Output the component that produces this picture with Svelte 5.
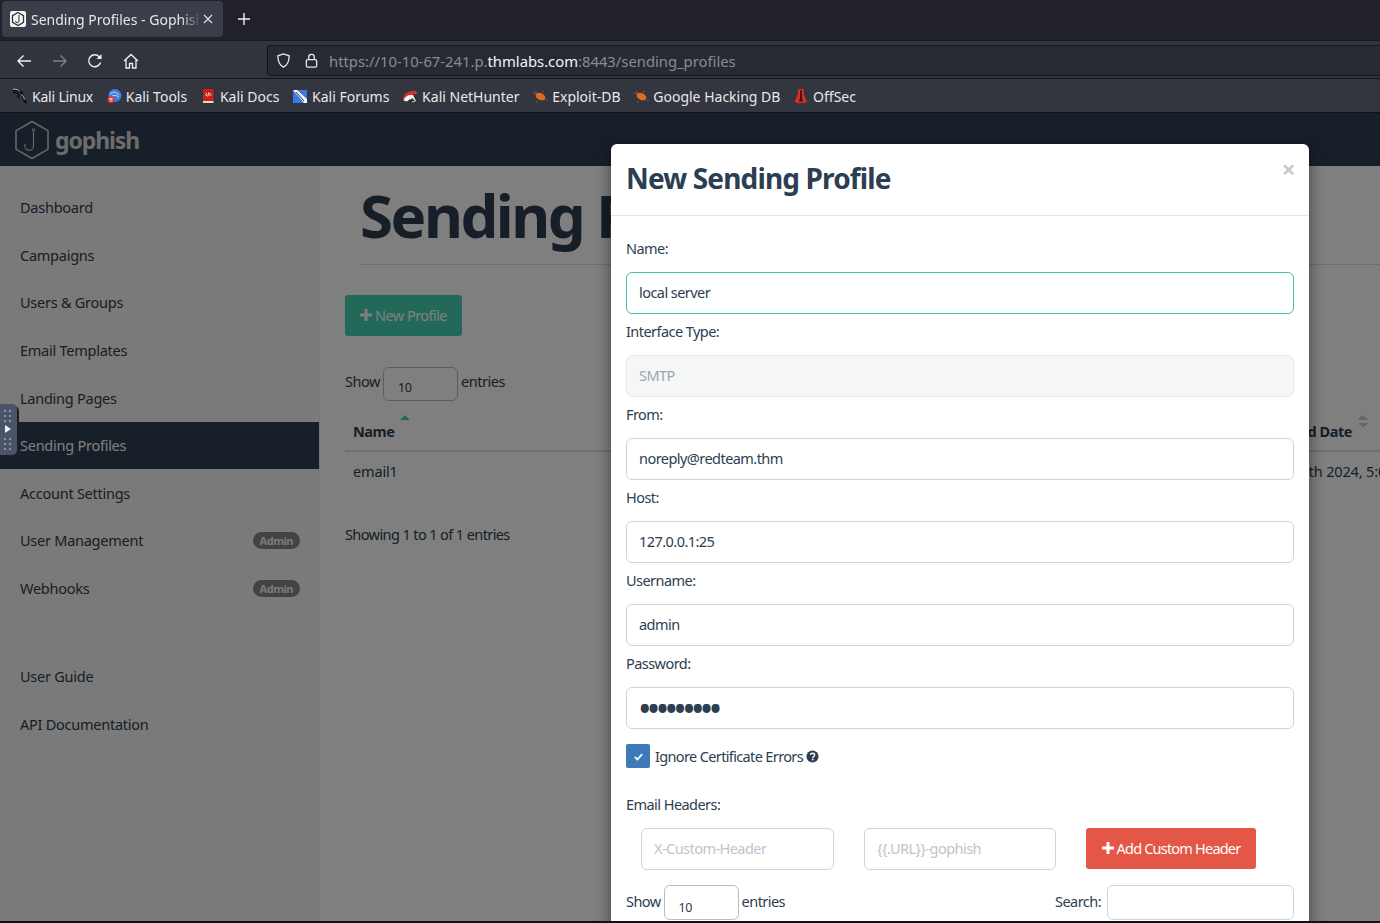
<script lang="ts">
	const bookmarks = [
		{ label: 'Kali Linux', icon: 'dragon' },
		{ label: 'Kali Tools', icon: 'tools' },
		{ label: 'Kali Docs', icon: 'docs' },
		{ label: 'Kali Forums', icon: 'forums' },
		{ label: 'Kali NetHunter', icon: 'hunter' },
		{ label: 'Exploit-DB', icon: 'bug' },
		{ label: 'Google Hacking DB', icon: 'bug' },
		{ label: 'OffSec', icon: 'offsec' },
	];

	const mainNav = [
		{ label: 'Dashboard' },
		{ label: 'Campaigns' },
		{ label: 'Users & Groups' },
		{ label: 'Email Templates' },
		{ label: 'Landing Pages' },
		{ label: 'Sending Profiles', active: true },
		{ label: 'Account Settings' },
		{ label: 'User Management', admin: true },
		{ label: 'Webhooks', admin: true },
	];

	const fields = [
		{ label: 'Name:', value: 'local server', cls: 'focused' },
		{ label: 'Interface Type:', value: 'SMTP', disabled: true },
		{ label: 'From:', value: 'noreply@redteam.thm' },
		{ label: 'Host:', value: '127.0.0.1:25' },
		{ label: 'Username:', value: 'admin' },
		{ label: 'Password:', value: '123456789', type: 'password', cls: 'secret' },
	];
</script>

{#snippet bookmarkIcon(icon: string)}
	<svg class="bm-icon" viewBox="0 0 16 16" aria-hidden="true">
		{#if icon === 'dragon'}
			<path d="M1 2.500c3.500-1 7 0 9 2.500 1.500 2 1.500 4 1.500 5.500 0 1.800 1 3 3 4.500" fill="none" stroke="#08080a" stroke-width="2" />
			<path d="M1 4.500c2.500-.5 5 .5 6 2.500-1.500.5-1.500 2 .5 3" fill="none" stroke="#08080a" stroke-width="1.300" />
			<path d="M1 1.300c3-.3 5.500.4 7 2M9.500 6c1.500 1.500 2.800 3.500 2.800 5.500" fill="none" stroke="#e4e4e8" stroke-width="0.800" />
		{:else if icon === 'tools'}
			<circle cx="9" cy="7.500" r="6.500" fill="#3f7fdc" />
			<path d="M4 6c3-3 6-2 9 1M6 8c2-1 4-1 7 1" fill="none" stroke="#cfe0fa" stroke-width="0.900" />
			<circle cx="5" cy="11.500" r="3.500" fill="#df3b32" />
			<path d="M3.500 10.500h3M4.300 10.500v3M5.800 10.500v3" stroke="#fff" stroke-width="0.700" />
		{:else if icon === 'docs'}
			<path d="M3 1h10.500v14H3z" fill="#c9201f" />
			<path d="M3 13h10.500v2H3z" fill="#e9d9c9" />
			<path d="M7 5L5.500 6.500 7 8M9.500 5L11 6.500 9.500 8M8.800 4.500L7.700 8.500" fill="none" stroke="#fff" stroke-width="0.900" />
		{:else if icon === 'forums'}
			<path d="M1 2h14v13H1z" fill="#3b78e0" />
			<path d="M1 2l4 0 10 9v4h-3z" fill="#f2f4f8" />
			<path d="M4 4l8 9" stroke="#222a3a" stroke-width="1" />
		{:else if icon === 'hunter'}
			<path d="M1 11C2 5 7 2.500 14 3l1.500 3C10 6 6 9 5 13z" fill="#d9302c" />
			<path d="M1.500 12.500c1-4 5-6 9.500-5.500l3 6-3.500 1.500-2.500-3.500-3 2.500z" fill="#f1f1f1" />
			<path d="M7 14l3-4 3 3z" fill="#2a2a30" />
		{:else if icon === 'bug'}
			<ellipse cx="8.500" cy="8.500" rx="5.200" ry="3.400" transform="rotate(28 8.500 8.500)" fill="#df6a23" />
			<path d="M1 5l3 1M3 3l2 2M14 12l2 .5M6 13l-2 1.500M10 4l2-1" stroke="#a55a2b" stroke-width="0.800" />
		{:else}
			<path d="M5.500 1h5l.5 6 3 7-3.500 1H5L1.500 14l3-7z" fill="#d3302d" />
			<path d="M7.300 2h1.400l.3 8 1 3.500H6l1-3.500z" fill="#3a0d0e" />
		{/if}
	</svg>
{/snippet}

{#snippet plus()}
	<svg class="plus" viewBox="0 0 12 12" aria-hidden="true">
		<path d="M4.500 0h3v4.500H12v3H7.500V12h-3V7.500H0v-3h4.500z" fill="currentColor" />
	</svg>
{/snippet}

<div class="window">
	<header class="tabstrip">
		<div class="tab">
			<svg class="favicon" viewBox="0 0 16 16" aria-hidden="true">
				<rect width="16" height="16" rx="2" fill="#f4f4f4" />
				<path d="M8 1.500l5.500 3.200v6.600L8 14.500l-5.500-3.200V4.700z" fill="none" stroke="#333" stroke-width="1.300" />
				<path d="M9 4v6a1.700 1.700 0 0 1-3.400 0" fill="none" stroke="#333" stroke-width="1" />
			</svg>
			<span class="tab-title">Sending Profiles - Gophish</span>
			<svg class="tab-close" viewBox="0 0 10 10" aria-hidden="true">
				<path d="M1 1l8 8M9 1l-8 8" stroke="#e4e4e6" stroke-width="1.100" />
			</svg>
		</div>
		<svg class="new-tab" viewBox="0 0 12 12" aria-hidden="true">
			<path d="M6 0v12M0 6h12" stroke="#f0f0f2" stroke-width="1.400" />
		</svg>
	</header>

	<nav class="toolbar">
		<svg class="tool" viewBox="0 0 16 16" aria-hidden="true">
			<path d="M15 8H2M7.500 2.500L2 8l5.500 5.500" fill="none" stroke="#f0f0f2" stroke-width="1.400" />
		</svg>
		<svg class="tool dim" viewBox="0 0 16 16" aria-hidden="true">
			<path d="M1 8h13M8.500 2.500L14 8l-5.500 5.500" fill="none" stroke="#80818a" stroke-width="1.400" />
		</svg>
		<svg class="tool" viewBox="0 0 16 16" aria-hidden="true">
			<path d="M13.500 9.500A6 6 0 1 1 12 3.500l2 2" fill="none" stroke="#f0f0f2" stroke-width="1.400" />
			<path d="M14.500 1v5h-5z" fill="#f0f0f2" />
		</svg>
		<svg class="tool" viewBox="0 0 16 16" aria-hidden="true">
			<path d="M1 8l7-6.500L15 8M3 6.500V15h3.500v-4.500h3V15H13V6.500" fill="none" stroke="#f0f0f2" stroke-width="1.300" />
		</svg>
		<div class="urlbar">
			<svg class="shield" viewBox="0 0 16 16" aria-hidden="true">
				<path d="M8 1l6 2c0 6-1.500 10-6 12C3.500 13 2 9 2 3z" fill="none" stroke="#e8e8ea" stroke-width="1.400" />
			</svg>
			<svg class="lock" viewBox="0 0 16 16" aria-hidden="true">
				<rect x="2.500" y="7" width="11" height="8" rx="1.500" fill="none" stroke="#e8e8ea" stroke-width="1.400" />
				<path d="M5 7V4.500a3 3 0 0 1 6 0V7" fill="none" stroke="#e8e8ea" stroke-width="1.400" />
			</svg>
			<span class="url">https://10-10-67-241.p.<b>thmlabs.com</b>:8443/sending_profiles</span>
		</div>
	</nav>

	<div class="bookmarks">
		{#each bookmarks as mark}
			<span class="bookmark">
				{@render bookmarkIcon(mark.icon)}
				{mark.label}
			</span>
		{/each}
	</div>

	<div class="page">
		<div class="navbar">
			<svg class="logo" viewBox="0 0 36 40" aria-hidden="true">
				<path d="M18 1.500l16 9.200v18.600l-16 9.200-16-9.200V10.700z" fill="none" stroke="#fff" stroke-width="1.500" />
				<circle cx="19.500" cy="10" r="1.300" fill="none" stroke="#fff" stroke-width="1" />
				<path d="M19.500 11.500v14.500a4.300 4.300 0 0 1-8.600 0v-2" fill="none" stroke="#fff" stroke-width="1.100" />
			</svg>
			<span class="brand">gophish</span>
		</div>

		<div class="columns">
			<aside class="sidebar">
				<ul class="nav main">
					{#each mainNav as item}
						<li class:active={item.active}>
							<span>{item.label}</span>
							{#if item.admin}<span class="admin">Admin</span>{/if}
						</li>
					{/each}
				</ul>
				<ul class="nav docs">
					<li><span>User Guide</span></li>
					<li><span>API Documentation</span></li>
				</ul>
			</aside>

			<main class="content">
				<h1>Sending Profiles</h1>
				<button type="button" class="new-profile">{@render plus()}New Profile</button>
				<div class="length">
					<span>Show</span><span class="fake-select">10</span><span>entries</span>
				</div>
				<div class="table-row head">
					<span class="name-col">Name<i class="sort-up"></i></span>
					<span class="date-col">Last Modified Date<i class="sort-both"></i></span>
				</div>
				<div class="table-row body">
					<span class="name-col">email1</span>
					<span class="date-col">September 12th 2024, 5:03:21 pm</span>
				</div>
				<p class="info">Showing 1 to 1 of 1 entries</p>
			</main>
		</div>

		<div class="backdrop"></div>

		<section class="modal">
			<div class="modal-header">
				<h2>New Sending Profile</h2>
				<span class="close">×</span>
			</div>
			<div class="modal-body">
				{#each fields as field}
					<label class="field">
						<span>{field.label}</span>
						<input
							class={field.cls}
							type={field.type ?? 'text'}
							value={field.value}
							disabled={field.disabled}
						/>
					</label>
				{/each}

				<div class="check-row">
					<span class="checkbox">
						<svg viewBox="0 0 12 12" aria-hidden="true">
							<path d="M2 6.500l2.800 2.800L10 3.500" fill="none" stroke="#fff" stroke-width="2" />
						</svg>
					</span>
					<span>Ignore Certificate Errors</span>
					<svg class="help" viewBox="0 0 14 14" aria-hidden="true">
						<circle cx="7" cy="7" r="6.500" fill="#2c3e50" />
						<path d="M4.800 5.400C5 4 6 3.500 7 3.500c1.400 0 2.300.8 2.300 1.900C9.300 7 7.300 7 7.300 8.500" fill="none" stroke="#fff" stroke-width="1.500" />
						<rect x="6.400" y="9.400" width="1.800" height="1.700" fill="#fff" />
					</svg>
				</div>

				<div class="headers-label">Email Headers:</div>
				<div class="header-row">
					<input class="key" placeholder="X-Custom-Header" />
					<input class="val" placeholder={'{{.URL}}-gophish'} />
					<button type="button" class="add-header">{@render plus()}Add Custom Header</button>
				</div>
				<div class="table-controls">
					<div class="length">
						<span>Show</span><span class="fake-select">10</span><span>entries</span>
					</div>
					<label class="search"><span>Search:</span><input /></label>
				</div>
			</div>
		</section>

		<div class="handle">
			<svg viewBox="0 0 17 51" aria-hidden="true">
				<g fill="#8b93a3">
					{#each [6, 11, 16, 34, 39, 44] as y}
						<rect x="4" {y} width="2" height="2" />
						<rect x="9" {y} width="2" height="2" />
					{/each}
				</g>
				<path d="M5 21l6 4-6 4z" fill="#f2f2f2" />
			</svg>
		</div>
	</div>
	<div class="bottom-edge"></div>
</div>

<style>
	:global(body) {
		margin: 0;
		background: #000;
	}

	.window {
		width: 1380px;
		height: 923px;
		display: flex;
		flex-direction: column;
		overflow: hidden;
		font-family: "Noto Sans", sans-serif;
	}

	.tabstrip {
		flex: none;
		height: 41px;
		box-sizing: border-box;
		padding: 1px 0 0 2px;
		display: flex;
		align-items: flex-start;
		background: #20212a;
		border-bottom: 1px solid #17181d;
	}

	.tab {
		width: 221px;
		height: 36px;
		box-sizing: border-box;
		padding: 0 10px 0 8px;
		display: flex;
		align-items: center;
		gap: 5px;
		position: relative;
		background: #3b3d48;
		border-radius: 4px;
		color: #e6e6e8;
		font-size: 14px;
	}

	.favicon {
		flex: none;
		width: 16px;
		height: 16px;
	}

	.tab-title {
		flex: 1;
		white-space: nowrap;
		overflow: hidden;
		mask-image: linear-gradient(to right, #000 150px, transparent 170px);
	}

	.tab-close {
		position: absolute;
		left: 201px;
		top: 13px;
		width: 10px;
		height: 10px;
	}

	.new-tab {
		width: 12px;
		height: 12px;
		margin: 12px 0 0 15px;
	}

	.toolbar {
		flex: none;
		height: 38px;
		box-sizing: border-box;
		padding: 2px 0 0 16px;
		display: flex;
		align-items: center;
		background: #31333d;
		border-bottom: 1px solid #17181d;
	}

	.tool {
		flex: none;
		width: 16px;
		height: 16px;
		margin-right: 19.500px;
	}

	.urlbar {
		flex: 1;
		height: 31px;
		margin-left: 109px;
		box-sizing: border-box;
		padding-left: 8px;
		display: flex;
		align-items: center;
		background: #282a33;
		border: 1px solid #15161a;
		border-right: 0;
		border-radius: 4px 0 0 4px;
		font-size: 14.800px;
		color: #8a8b93;
	}

	.shield,
	.lock {
		flex: none;
		width: 15px;
		height: 15px;
		margin-right: 13px;
	}

	.lock {
		margin-right: 10px;
	}

	.url b {
		font-weight: 400;
		color: #f4f4f6;
	}

	.bookmarks {
		flex: none;
		height: 34px;
		box-sizing: border-box;
		padding: 1px 0 0 12px;
		display: flex;
		align-items: center;
		gap: 12.700px;
		background: #33353f;
		border-bottom: 1px solid #111216;
		color: #e8e8ea;
		font-size: 14px;
	}

	.bookmark {
		display: flex;
		align-items: center;
		gap: 4px;
	}

	.bookmark:first-child {
		letter-spacing: -0.200px;
	}

	.bm-icon {
		width: 16px;
		height: 16px;
	}

	.page {
		flex: 1;
		min-height: 0;
		display: flex;
		flex-direction: column;
		position: relative;
		overflow: hidden;
		background: #fff;
		color: #2c3e50;
		font-size: 14.500px;
		letter-spacing: -0.450px;
	}

	.navbar {
		flex: none;
		height: 53px;
		box-sizing: border-box;
		padding-left: 14px;
		display: flex;
		align-items: center;
		gap: 5px;
		background: #2e3f52;
	}

	.logo {
		width: 36px;
		height: 40px;
		opacity: 0.8;
	}

	.brand {
		color: #d8d8d8;
		font-size: 23px;
		font-weight: 700;
		letter-spacing: -1.100px;
	}

	.columns {
		flex: 1;
		min-height: 0;
		display: flex;
	}

	.sidebar {
		flex: none;
		width: 320px;
		box-sizing: border-box;
		padding-top: 18px;
		background: #f4f4f4;
		border-right: 1px solid #eee;
		letter-spacing: -0.250px;
	}

	.nav {
		margin: 0;
		padding: 0;
		list-style: none;
	}

	.nav li {
		height: 47.600px;
		box-sizing: border-box;
		padding: 0 19px 1px 20px;
		display: flex;
		align-items: center;
		justify-content: space-between;
	}

	.nav li.active {
		height: 47px;
		margin-bottom: 0.600px;
		background: #2e3f52;
		color: #fff;
	}

	.nav.main {
		padding-bottom: 15.500px;
		border-bottom: 1px solid #eee;
		margin-bottom: 24px;
	}

	.admin {
		padding: 1px 7px;
		background: #868686;
		border-radius: 9px;
		color: #f4f4f4;
		font-size: 11px;
		font-weight: 700;
		letter-spacing: -0.450px;
	}

	.content {
		flex: 1;
		min-width: 0;
		padding: 0 0 0 25px;
		white-space: nowrap;
		overflow: hidden;
	}

	h1 {
		margin: 13px 0 30px 15px;
		padding-bottom: 13px;
		font-size: 60px;
		line-height: 72px;
		font-weight: 700;
		letter-spacing: -2.500px;
		border-bottom: 1px solid #ddd;
	}

	.new-profile,
	.add-header {
		height: 41px;
		padding: 0 0 2px;
		display: flex;
		align-items: center;
		justify-content: center;
		gap: 3px;
		border: 0;
		border-radius: 3px;
		color: #fff;
		font: inherit;
		letter-spacing: -0.550px;
	}

	.new-profile {
		width: 117px;
		background: #47d2b4;
	}

	.plus {
		flex: none;
		width: 12px;
		height: 12px;
	}

	.length {
		display: flex;
		align-items: flex-start;
		gap: 3px;
		white-space: pre;
		line-height: 28px;
	}

	.content .length {
		margin-top: 31px;
	}

	.fake-select {
		width: 75px;
		height: 34px;
		box-sizing: border-box;
		padding: 10px 0 0 14px;
		border: 1px solid #bbb;
		border-radius: 6px;
		font-size: 12.500px;
		line-height: 20px;
	}

	.table-row {
		display: grid;
		grid-template-columns: 871px auto;
		padding-left: 8px;
	}

	.table-row.head {
		height: 51px;
		box-sizing: border-box;
		padding-top: 20px;
		border-bottom: 2px solid #ddd;
		font-weight: 700;
	}

	.table-row.body {
		padding-top: 9px;
		letter-spacing: -0.150px;
	}

	.table-row.body .date-col {
		margin-left: -9px;
	}

	.name-col,
	.date-col {
		position: relative;
	}

	.sort-up {
		position: absolute;
		left: 47px;
		top: -6px;
		border: 5px solid transparent;
		border-top: 0;
		border-bottom-color: #47d2b4;
	}

	.sort-both {
		position: absolute;
		left: 134px;
		top: -6px;
		width: 10px;
		height: 13px;
		background:
			linear-gradient(to bottom right, transparent 50%, #ccc 50%) 0 0 / 5px 5px no-repeat,
			linear-gradient(to bottom left, transparent 50%, #ccc 50%) 5px 0 / 5px 5px no-repeat,
			linear-gradient(to top right, transparent 50%, #ccc 50%) 0 8px / 5px 5px no-repeat,
			linear-gradient(to top left, transparent 50%, #ccc 50%) 5px 8px / 5px 5px no-repeat;
	}

	.info {
		margin: 43px 0 0;
		letter-spacing: -0.600px;
	}

	.backdrop {
		position: absolute;
		inset: 0;
		background: rgba(0, 0, 0, 0.5);
	}

	.modal {
		position: absolute;
		left: 611px;
		top: 31px;
		width: 698px;
		background: #fff;
		border-radius: 6px;
		box-shadow: 0 5px 15px rgba(0, 0, 0, 0.5);
		letter-spacing: -0.550px;
	}

	.modal-header {
		height: 72px;
		box-sizing: border-box;
		padding: 0 15px;
		display: flex;
		align-items: center;
		justify-content: space-between;
		border-bottom: 1px solid #e5e5e5;
	}

	h2 {
		margin: 0 0 3px;
		font-size: 28px;
		font-weight: 700;
		letter-spacing: -0.850px;
	}

	.close {
		margin: -22px -1px 0 0;
		color: #c8c8c8;
		font-size: 24px;
		font-weight: 700;
		line-height: 1;
	}

	.modal-body {
		padding: 21px 15px 100px;
	}

	.field {
		height: 83px;
		display: block;
	}

	.field span {
		display: block;
		height: 35px;
		line-height: 23px;
	}

	input {
		box-sizing: border-box;
		font: inherit;
		letter-spacing: inherit;
		color: #2c3e50;
		background: #fff;
		border: 1px solid #ced4da;
		border-radius: 6px;
		outline: none;
	}

	input::placeholder {
		color: #bcc4cc;
		opacity: 1;
	}

	.field input {
		display: block;
		width: 668px;
		height: 42px;
		padding: 0 12px 2px;
	}

	.field input.focused {
		border-color: #44c2a5;
	}

	.field input.secret {
		padding: 0 11px;
		font-size: 36px;
		letter-spacing: -4.700px;
	}

	.field input:disabled {
		background: #f5f7f6;
		border-color: #e3e8ec;
		color: #98a5b2;
	}

	.check-row {
		height: 24px;
		margin-top: 9px;
		display: flex;
		align-items: center;
		gap: 5px;
		letter-spacing: -0.640px;
	}

	.checkbox {
		width: 24px;
		height: 24px;
		display: flex;
		align-items: center;
		justify-content: center;
		background: #3f7ab8;
		border-radius: 2px;
	}

	.checkbox svg {
		width: 11px;
		height: 11px;
	}

	.help {
		width: 13px;
		height: 13px;
		margin-left: -2px;
	}

	.headers-label {
		margin-top: 25px;
		line-height: 23px;
	}

	.header-row {
		margin-top: 12px;
		padding-left: 15px;
		display: flex;
		align-items: flex-start;
	}

	.header-row input {
		height: 42px;
		padding: 0 12px 2px;
	}

	.key {
		width: 193px;
		margin-right: 30px;
	}

	.val {
		width: 192px;
		margin-right: 30px;
	}

	.add-header {
		width: 170px;
		background: #e45645;
		letter-spacing: -0.800px;
	}

	.table-controls {
		margin-top: 15px;
		display: flex;
		justify-content: space-between;
	}

	.table-controls .length {
		line-height: 32px;
	}

	.table-controls .fake-select {
		height: 35px;
		padding-top: 12px;
		line-height: 20px;
	}

	.search {
		display: flex;
		align-items: flex-start;
		gap: 6px;
		line-height: 32px;
	}

	.search input {
		width: 187px;
		height: 35px;
	}

	.handle {
		position: absolute;
		left: 0;
		top: 291px;
		width: 17px;
		height: 51px;
		background: #4a5468;
		border-radius: 0 5px 5px 0;
		box-shadow: 2px 2px 0 #1c2026;
	}

	.handle svg {
		display: block;
		width: 17px;
		height: 51px;
	}

	.bottom-edge {
		flex: none;
		height: 2px;
		background: #111;
	}
</style>
